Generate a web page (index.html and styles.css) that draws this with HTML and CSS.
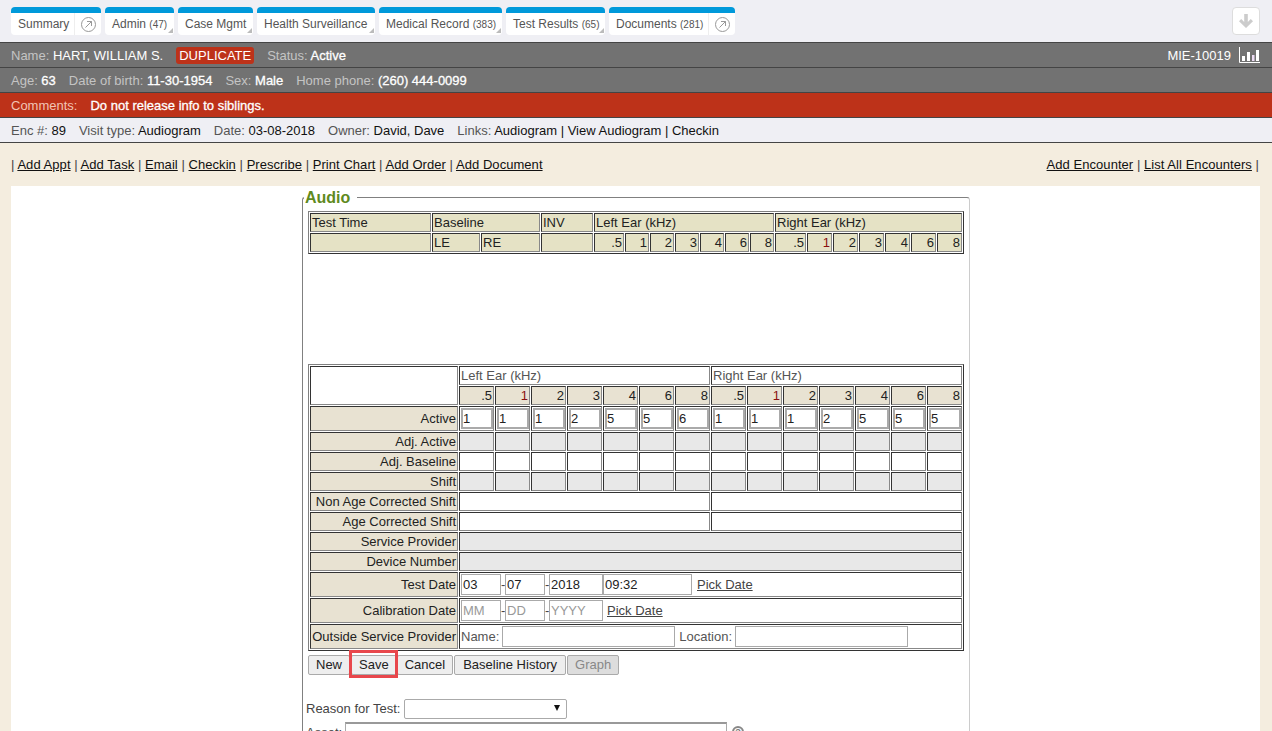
FILE: index.html
```html
<!DOCTYPE html>
<html lang="en">
<head>
  <meta charset="UTF-8">
  <title>Audio</title>
  <link rel="stylesheet" href="styles.css">
</head>
<body>

  <div class="tabbar">
    <div class="tab t-summary">
      <div class="tab-body"><span class="tab-label">Summary</span>
        <span class="tab-go"><svg width="15" height="15" viewBox="0 0 15 15"><circle cx="7.5" cy="7.5" r="7" fill="none" stroke="#999"/><path d="M4.5 10.5 10.5 4.5M6 4.5h4.5V9" fill="none" stroke="#999"/></svg></span>
      </div>
    </div>
    <div class="tab menu t-admin"><div class="tab-body"><span class="tab-label">Admin <small>(47)</small></span></div></div>
    <div class="tab menu t-case"><div class="tab-body"><span class="tab-label">Case Mgmt</span></div></div>
    <div class="tab menu t-health"><div class="tab-body"><span class="tab-label">Health Surveillance</span></div></div>
    <div class="tab menu t-medical"><div class="tab-body"><span class="tab-label">Medical Record <small>(383)</small></span></div></div>
    <div class="tab menu t-results"><div class="tab-body"><span class="tab-label">Test Results <small>(65)</small></span></div></div>
    <div class="tab t-docs">
      <div class="tab-body"><span class="tab-label">Documents <small>(281)</small></span>
        <span class="tab-go"><svg width="15" height="15" viewBox="0 0 15 15"><circle cx="7.5" cy="7.5" r="7" fill="none" stroke="#999"/><path d="M4.5 10.5 10.5 4.5M6 4.5h4.5V9" fill="none" stroke="#999"/></svg></span>
      </div>
    </div>
    <button class="collapse"><svg width="16" height="16" viewBox="0 0 16 16"><path d="M8 15 1 8.2 3.2 6 6.2 9V1h3.6v8l3-3L15 8.2Z" fill="#ccc"/></svg></button>
  </div>

  <div class="bar grey">
    <span class="item">Name: <b class="plain">HART, WILLIAM S.</b></span>
    <span class="badge">DUPLICATE</span>
    <span class="item">Status: <b>Active</b></span>
    <span class="bar-right">
      <span class="mrn">MIE-10019</span>
      <svg width="21" height="16" viewBox="0 0 21 16"><path d="M.5 0v15.5H21" fill="none" stroke="#fff"/><path d="M3 9h3v5H3ZM8 5h3v9H8Z" fill="#fff"/><path d="M13 8h2.500v6H13Z" fill="#eedcf5"/><path d="M17 3h3v11h-3Z" fill="#fff"/></svg>
    </span>
  </div>
  <div class="bar grey">
    <span class="item">Age: <b>63</b></span>
    <span class="item">Date of birth: <b>11-30-1954</b></span>
    <span class="item">Sex: <b>Male</b></span>
    <span class="item">Home phone: <b>(260) 444-0099</b></span>
  </div>
  <div class="bar red">
    <span class="item comment">Comments:</span>
    <b>Do not release info to siblings.</b>
  </div>
  <div class="bar light">
    <span class="item">Enc #: <b>89</b></span>
    <span class="item">Visit type: <b>Audiogram</b></span>
    <span class="item">Date: <b>03-08-2018</b></span>
    <span class="item">Owner: <b>David, Dave</b></span>
    <span class="item">Links: <b>Audiogram | View Audiogram | Checkin</b></span>
  </div>

  <div class="actions">
    <div>| <a href="#">Add Appt</a> | <a href="#">Add Task</a> | <a href="#">Email</a> | <a href="#">Checkin</a> | <a href="#">Prescribe</a> | <a href="#">Print Chart</a> | <a href="#">Add Order</a> | <a href="#">Add Document</a></div>
    <div><a href="#">Add Encounter</a> | <a href="#">List All Encounters</a> |</div>
  </div>

  <div class="panel">
    <fieldset class="audio">
      <legend>Audio</legend>

      <table class="grid history">
        <colgroup>
          <col class="c121"><col class="c48"><col class="c59"><col class="c52">
          <col class="c30"><col class="c24"><col class="c24"><col class="c24"><col class="c24"><col class="c24"><col class="c24">
          <col class="c31"><col class="c25"><col class="c25"><col class="c25"><col class="c25"><col class="c25"><col class="c25">
        </colgroup>
        <tr>
          <td>Test Time</td><td colspan="2">Baseline</td><td>INV</td>
          <td colspan="7">Left Ear (kHz)</td><td colspan="7">Right Ear (kHz)</td>
        </tr>
        <tr>
          <td></td><td>LE</td><td>RE</td><td></td>
          <td class="num">.5</td><td class="num">1</td><td class="num">2</td><td class="num">3</td><td class="num">4</td><td class="num">6</td><td class="num">8</td>
          <td class="num">.5</td><td class="num hi">1</td><td class="num">2</td><td class="num">3</td><td class="num">4</td><td class="num">6</td><td class="num">8</td>
        </tr>
      </table>

      <div class="history-rows"></div>

      <table class="grid entry">
        <colgroup>
          <col class="c148">
          <col class="c35"><col class="c35"><col class="c35"><col class="c35"><col class="c35"><col class="c35"><col class="c35">
          <col class="c35"><col class="c35"><col class="c35"><col class="c35"><col class="c35"><col class="c35"><col class="c35">
        </colgroup>
        <tr>
          <td rowspan="2" class="blank"></td>
          <td colspan="7" class="ear">Left Ear (kHz)</td>
          <td colspan="7" class="ear">Right Ear (kHz)</td>
        </tr>
        <tr>
          <td class="num">.5</td><td class="num hi">1</td><td class="num">2</td><td class="num">3</td><td class="num">4</td><td class="num">6</td><td class="num">8</td>
          <td class="num">.5</td><td class="num hi">1</td><td class="num">2</td><td class="num">3</td><td class="num">4</td><td class="num">6</td><td class="num">8</td>
        </tr>
        <tr class="tall">
          <td class="label">Active</td>
          <td class="cell"><input class="freq" value="1"></td><td class="cell"><input class="freq" value="1"></td><td class="cell"><input class="freq" value="1"></td><td class="cell"><input class="freq" value="2"></td><td class="cell"><input class="freq" value="5"></td><td class="cell"><input class="freq" value="5"></td><td class="cell"><input class="freq" value="6"></td>
          <td class="cell"><input class="freq" value="1"></td><td class="cell"><input class="freq" value="1"></td><td class="cell"><input class="freq" value="1"></td><td class="cell"><input class="freq" value="2"></td><td class="cell"><input class="freq" value="5"></td><td class="cell"><input class="freq" value="5"></td><td class="cell"><input class="freq" value="5"></td>
        </tr>
        <tr>
          <td class="label">Adj. Active</td>
          <td class="off"></td><td class="off"></td><td class="off"></td><td class="off"></td><td class="off"></td><td class="off"></td><td class="off"></td>
          <td class="off"></td><td class="off"></td><td class="off"></td><td class="off"></td><td class="off"></td><td class="off"></td><td class="off"></td>
        </tr>
        <tr>
          <td class="label">Adj. Baseline</td>
          <td class="cell"></td><td class="cell"></td><td class="cell"></td><td class="cell"></td><td class="cell"></td><td class="cell"></td><td class="cell"></td>
          <td class="cell"></td><td class="cell"></td><td class="cell"></td><td class="cell"></td><td class="cell"></td><td class="cell"></td><td class="cell"></td>
        </tr>
        <tr>
          <td class="label">Shift</td>
          <td class="off"></td><td class="off"></td><td class="off"></td><td class="off"></td><td class="off"></td><td class="off"></td><td class="off"></td>
          <td class="off"></td><td class="off"></td><td class="off"></td><td class="off"></td><td class="off"></td><td class="off"></td><td class="off"></td>
        </tr>
        <tr><td class="label">Non Age Corrected Shift</td><td colspan="7" class="cell"></td><td colspan="7" class="cell"></td></tr>
        <tr><td class="label">Age Corrected Shift</td><td colspan="7" class="cell"></td><td colspan="7" class="cell"></td></tr>
        <tr><td class="label">Service Provider</td><td colspan="14" class="off"></td></tr>
        <tr><td class="label">Device Number</td><td colspan="14" class="off"></td></tr>
        <tr class="tall">
          <td class="label">Test Date</td>
          <td colspan="14" class="cell">
            <div class="date-line">
              <input class="d2" value="03"><span class="dash">-</span><input class="d2" value="07"><span class="dash">-</span><input class="d4" value="2018"><input class="time" value="09:32"><a href="#" class="pick">Pick Date</a>
            </div>
          </td>
        </tr>
        <tr class="tall">
          <td class="label">Calibration Date</td>
          <td colspan="14" class="cell">
            <div class="date-line">
              <input class="d2" placeholder="MM"><span class="dash">-</span><input class="d2" placeholder="DD"><span class="dash">-</span><input class="d4" placeholder="YYYY"><a href="#" class="pick">Pick Date</a>
            </div>
          </td>
        </tr>
        <tr class="tall">
          <td class="label">Outside Service Provider</td>
          <td colspan="14" class="cell">
            <div class="date-line muted">
              <span>Name:</span><input class="wide name-input"><span class="loc">Location:</span><input class="wide">
            </div>
          </td>
        </tr>
      </table>

      <div class="buttons">
        <button class="tight">New</button><button class="tight marked">Save</button><button class="tight">Cancel</button><button class="spaced">Baseline History</button><button class="tight spaced disabled" disabled>Graph</button>
      </div>

      <div class="reason">
        <label>Reason for Test:</label>
        <span class="select-wrap"><select class="pick-reason"><option></option></select><i class="arrow"></i></span>
      </div>
      <div class="asset">
        <label>Asset:</label>
        <input class="asset-input">
        <span class="help">?</span>
      </div>
    </fieldset>
  </div>

</body>
</html>
```

FILE: styles.css
```css
html, body {
  height: 100%;
  overflow: hidden;
}

body {
  margin: 0;
  font-family: 'Liberation Sans', Arial, sans-serif;
  font-size: 13px;
  color: #222;
  background: #f4eddf;
  display: flex;
  flex-direction: column;
}

/* tabs */
.tabbar {
  flex: none;
  height: 42px;
  box-sizing: border-box;
  padding: 7px 12px 0 11px;
  background: #efeff4;
  display: flex;
  gap: 4px;
}

.tab {
  height: 28px;
  box-sizing: border-box;
  border-top: 6px solid #0099da;
  border-radius: 4px;
  background: #fff;
  font-size: 12px;
  color: #555;
}

.t-summary { width: 90px; }
.t-admin { width: 69px; }
.t-case { width: 75px; }
.t-health { width: 118px; }
.t-medical { width: 123px; }
.t-results { width: 99px; }
.t-docs { width: 126px; }

.tab-body {
  position: relative;
  height: 22px;
  display: flex;
  align-items: center;
  justify-content: space-between;
  padding-left: 7px;
}

.tab small {
  font-size: 10px;
}

.tab.menu .tab-label {
  white-space: nowrap;
}

.tab.menu .tab-body::after {
  content: "";
  position: absolute;
  right: 1px;
  bottom: 2px;
  border-style: solid;
  border-width: 0 0 5px 5px;
  border-color: transparent transparent #bbb transparent;
}

.tab-go {
  height: 22px;
  padding: 0 5px 0 6px;
  border-left: 1px solid #eee;
  display: flex;
  align-items: center;
}

.collapse {
  margin-left: auto;
  width: 28px;
  height: 28px;
  padding: 0;
  border: 1px solid #ddd;
  border-radius: 4px;
  background: #fff;
  display: flex;
  align-items: center;
  justify-content: center;
}

/* patient bars */
.bar {
  flex: none;
  height: 25px;
  box-sizing: border-box;
  border-top: 1px solid #444;
  padding: 0 12px 0 11px;
  display: flex;
  align-items: center;
  gap: 13px;
}

.bar b {
  font-weight: normal;
}

.grey {
  background: #727272;
  color: #c4c4c4;
}

.grey b,
.red b {
  color: #fff;
  -webkit-text-stroke: 0.3px #fff;
}

.grey b.plain {
  -webkit-text-stroke: 0;
}

.red {
  background: #bd3219;
  color: #fff;
}

.comment {
  color: #f2c4b4;
}

.light {
  background: #efeff4;
  color: #555;
  height: 26px;
  border-bottom: 1px solid #444;
}

.light b {
  color: #111;
}

.badge {
  padding: 1px 3px;
  border-radius: 3px;
  background: #bd3219;
  color: #fff;
  line-height: 15px;
}

.bar-right {
  margin-left: auto;
  display: flex;
  align-items: center;
  gap: 8px;
  color: #fff;
}

/* links under the bars */
.actions {
  flex: none;
  height: 43px;
  box-sizing: border-box;
  padding: 0 13px 0 11px;
  display: flex;
  justify-content: space-between;
  align-items: center;
  color: #444;
  letter-spacing: 0.05px;
}

.actions a {
  color: #111;
}

.panel {
  flex: 1;
  margin: 0 12px 0 11px;
  background: #fff;
  overflow: hidden;
}

/* audio form */
.audio {
  box-sizing: border-box;
  width: 668px;
  margin: 1px 0 0 291px;
  padding: 4px 5px 0 5px;
  min-width: 0;
  border: 1px solid #808080;
  border-right-color: #ccc;
  border-bottom: none;
  border-radius: 3px;
}

.audio legend {
  padding: 2px 7px 0 1px;
  margin-left: -4px;
  font-size: 16px;
  font-weight: bold;
  color: #5f8a1e;
}

.grid {
  table-layout: fixed;
  border-collapse: separate;
  border-spacing: 1px;
  border: 1px solid;
  border-color: #808080 #333 #333 #808080;
}

.grid td {
  box-sizing: border-box;
  height: 19px;
  padding: 0 1px;
  border: 1px solid;
  border-color: #333 #888 #888 #333;
  line-height: 15px;
  overflow: hidden;
  white-space: nowrap;
}

.c121 { width: 121px; }
.c48 { width: 48px; }
.c59 { width: 59px; }
.c52 { width: 52px; }
.c30 { width: 30px; }
.c24 { width: 24px; }
.c31 { width: 31px; }
.c25 { width: 25px; }
.c148 { width: 148px; }
.c35 { width: 35px; }

.history td {
  background: #e5e2c5;
}

.num {
  text-align: right;
}

.hi {
  color: #8a1010;
}

.history-rows {
  height: 110px;
}

.entry td {
  background: #fff;
}

.entry td.num,
.entry td.label {
  background: #e8e2d2;
}

.entry td.label {
  text-align: right;
}

.entry td.off {
  background: #e8e8e8;
}

.entry td.ear {
  color: #555;
}

.entry td.cell {
  padding: 0 0 0 1px;
}

.entry tr.tall td {
  height: 25px;
}

.grid input {
  box-sizing: border-box;
  height: 21px;
  margin: 0;
  padding: 0 1px;
  border: 1px solid #aaa;
  border-radius: 0;
  font-family: inherit;
  font-size: 13px;
  color: #222;
  display: block;
}

.grid input::placeholder {
  color: #999;
}

.grid input.freq {
  width: 32px;
  padding: 0;
  border-width: 2px;
}

.date-line {
  display: flex;
  align-items: center;
}

.date-line .d2 {
  width: 40px;
}

.date-line .d4 {
  width: 54px;
}

.date-line .time {
  width: 89px;
}

.dash {
  width: 4px;
  color: #444;
}

.pick {
  margin-left: 5px;
  color: #444;
}

.d4 + .pick {
  margin-left: 4px;
}

.muted {
  color: #555;
}

.date-line .wide {
  width: 173px;
}

.date-line .name-input {
  margin-left: 3px;
}

.loc {
  margin: 0 3px 0 4px;
}

.buttons {
  margin-top: 4px;
  display: flex;
}

.buttons button {
  height: 20px;
  padding: 0 8px;
  border: 1px solid #aaa;
  border-radius: 2px;
  background: #eee;
  font-family: inherit;
  font-size: 13px;
  color: #222;
  line-height: 16px;
}

.buttons button.tight {
  padding: 0 7px;
}

.buttons button.spaced {
  margin-left: 1px;
}

.buttons button.disabled {
  color: #888;
  background: #ddd;
}

.buttons .marked {
  position: relative;
  margin-left: 1px;
}

.buttons .marked::after {
  content: "";
  position: absolute;
  top: -6px;
  left: -3px;
  right: -2px;
  bottom: -4px;
  border: 3px solid #e8474c;
}

.reason {
  margin-top: 24px;
  margin-left: -2px;
  display: flex;
  align-items: center;
  gap: 4px;
  color: #444;
}

.reason label {
  padding-bottom: 2px;
}

.select-wrap {
  position: relative;
  display: block;
}

.pick-reason {
  display: block;
  width: 163px;
  height: 20px;
  border: 1px solid #aaa;
  border-radius: 2px;
  background: #fff;
  appearance: none;
}

.arrow {
  position: absolute;
  right: 7px;
  top: 6px;
  border-style: solid;
  border-width: 6px 3px 0 3px;
  border-color: #111 transparent transparent transparent;
}

.asset {
  margin-top: 3px;
  margin-left: -2px;
  display: flex;
  align-items: flex-start;
  color: #444;
}

.asset label {
  width: 39px;
  padding-top: 3px;
}

.asset-input {
  box-sizing: border-box;
  width: 382px;
  height: 40px;
  border: 1px solid #aaa;
  border-top: 2px solid #999;
}

.help {
  box-sizing: border-box;
  margin: 4px 0 0 5px;
  width: 12px;
  height: 12px;
  border: 2px solid #888;
  border-radius: 50%;
  color: #777;
  font-size: 9px;
  font-weight: bold;
  line-height: 9px;
  text-align: center;
}
```
